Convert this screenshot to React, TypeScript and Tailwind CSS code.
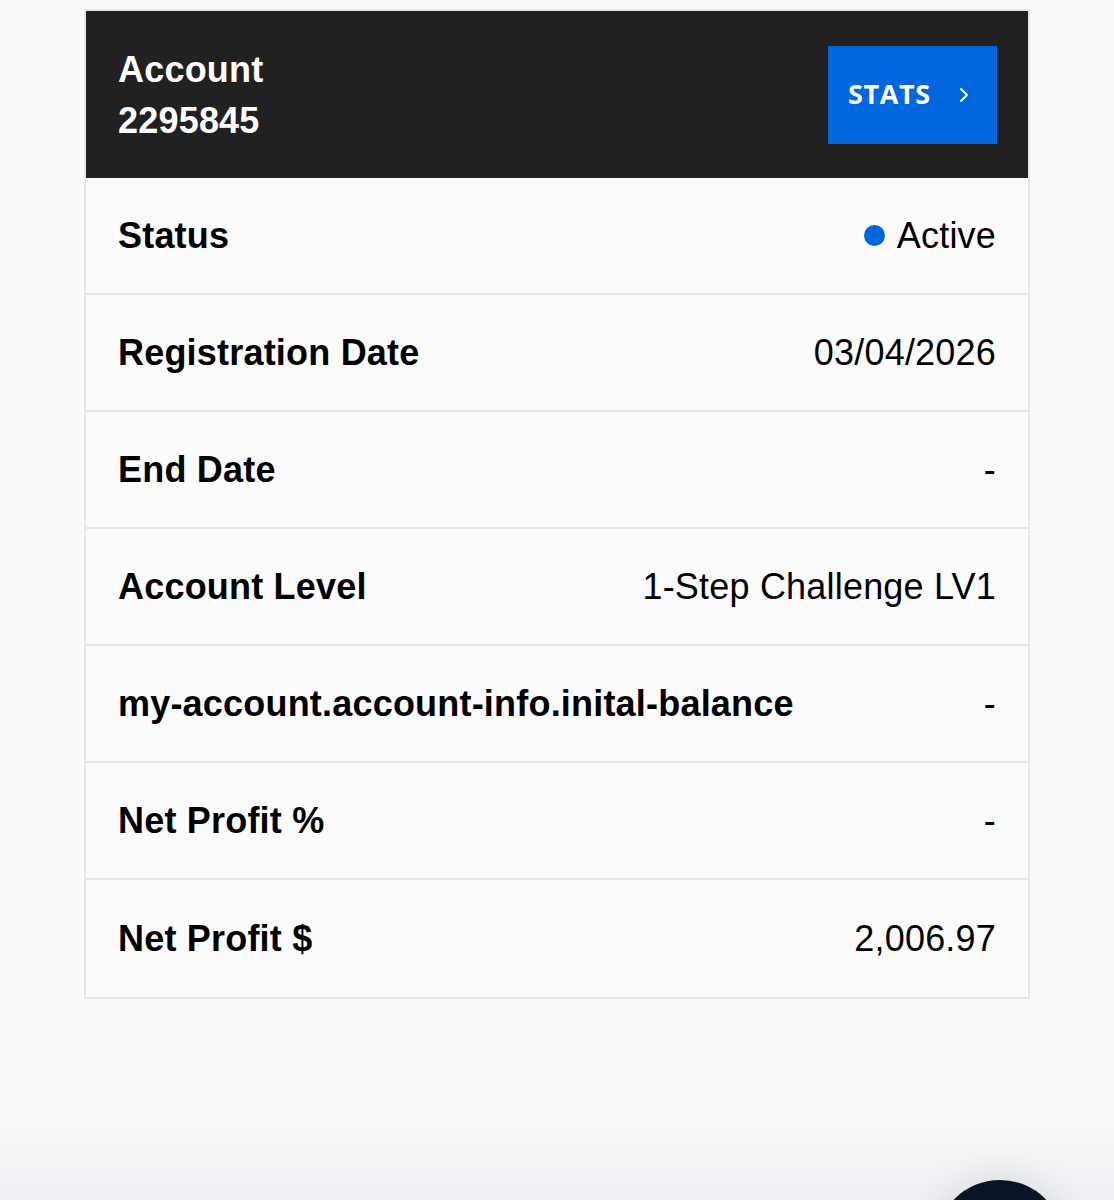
import React from 'react';

const rows: { label: string; value: string; active?: boolean }[] = [
  { label: 'Status', value: 'Active', active: true },
  { label: 'Registration Date', value: '03/04/2026' },
  { label: 'End Date', value: '-' },
  { label: 'Account Level', value: '1-Step Challenge LV1' },
  { label: 'my-account.account-info.inital-balance', value: '-' },
  { label: 'Net Profit %', value: '-' },
  { label: 'Net Profit $', value: '2,006.97' },
];

export default function App() {
  return (
    <div className="relative min-h-[1200px] overflow-hidden bg-[#fafafa] font-['Liberation_Sans',Arial,sans-serif] text-black">
      <div className="pl-[84px] pt-[9px]">
        <div className="w-[946px] border-2 border-[#e6e6ea] bg-[#fbfbfc]">
          {/* header */}
          <div className="flex h-[167px] items-center justify-between bg-[#212121] pl-[32px] pr-[31px]">
            <div className="text-[36px] font-bold leading-[51px] tracking-[0.2px] text-white">
              <div>Account</div>
              <div>2295845</div>
            </div>
            <button className="flex h-[98px] w-[169px] items-center gap-[28px] bg-[#0066dd] pl-[20px] text-white">
              <span className="font-['Open_Sans',sans-serif] text-[27px] font-bold tracking-[0.6px]">STATS</span>
              <svg width="10" height="16" viewBox="0 0 10 16" fill="none" className="mt-[1px]">
                <path d="M2 2l6 6-6 6" stroke="white" strokeWidth="2" strokeLinecap="round" strokeLinejoin="round" />
              </svg>
            </button>
          </div>

          {rows.map((r, i) => (
            <div
              key={r.label}
              className={`flex h-[117px] items-center justify-between px-[32px] tracking-[0.2px] ${
                i < rows.length - 1 ? 'border-b-2 border-[#e6e6ea]' : 'h-[116px]'
              }`}
            >
              <span className="text-[36px] font-bold">{r.label}</span>
              <span className="flex items-center gap-[12px] text-[36px]">
                {r.active && <span className="h-[21px] w-[21px] rounded-full bg-[#0066dd]" />}
                {r.value}
              </span>
            </div>
          ))}
        </div>
      </div>

      {/* bottom fade */}
      <div className="absolute bottom-0 left-0 right-0 h-[90px] bg-gradient-to-b from-[#fafafa] to-[#eef0f3]" />

      {/* floating chat button */}
      <div className="absolute left-[936px] top-[1180px] h-[128px] w-[128px] rounded-full bg-[#0b1426] shadow-[0_0_40px_rgba(0,0,0,0.12)]" />
    </div>
  );
}
